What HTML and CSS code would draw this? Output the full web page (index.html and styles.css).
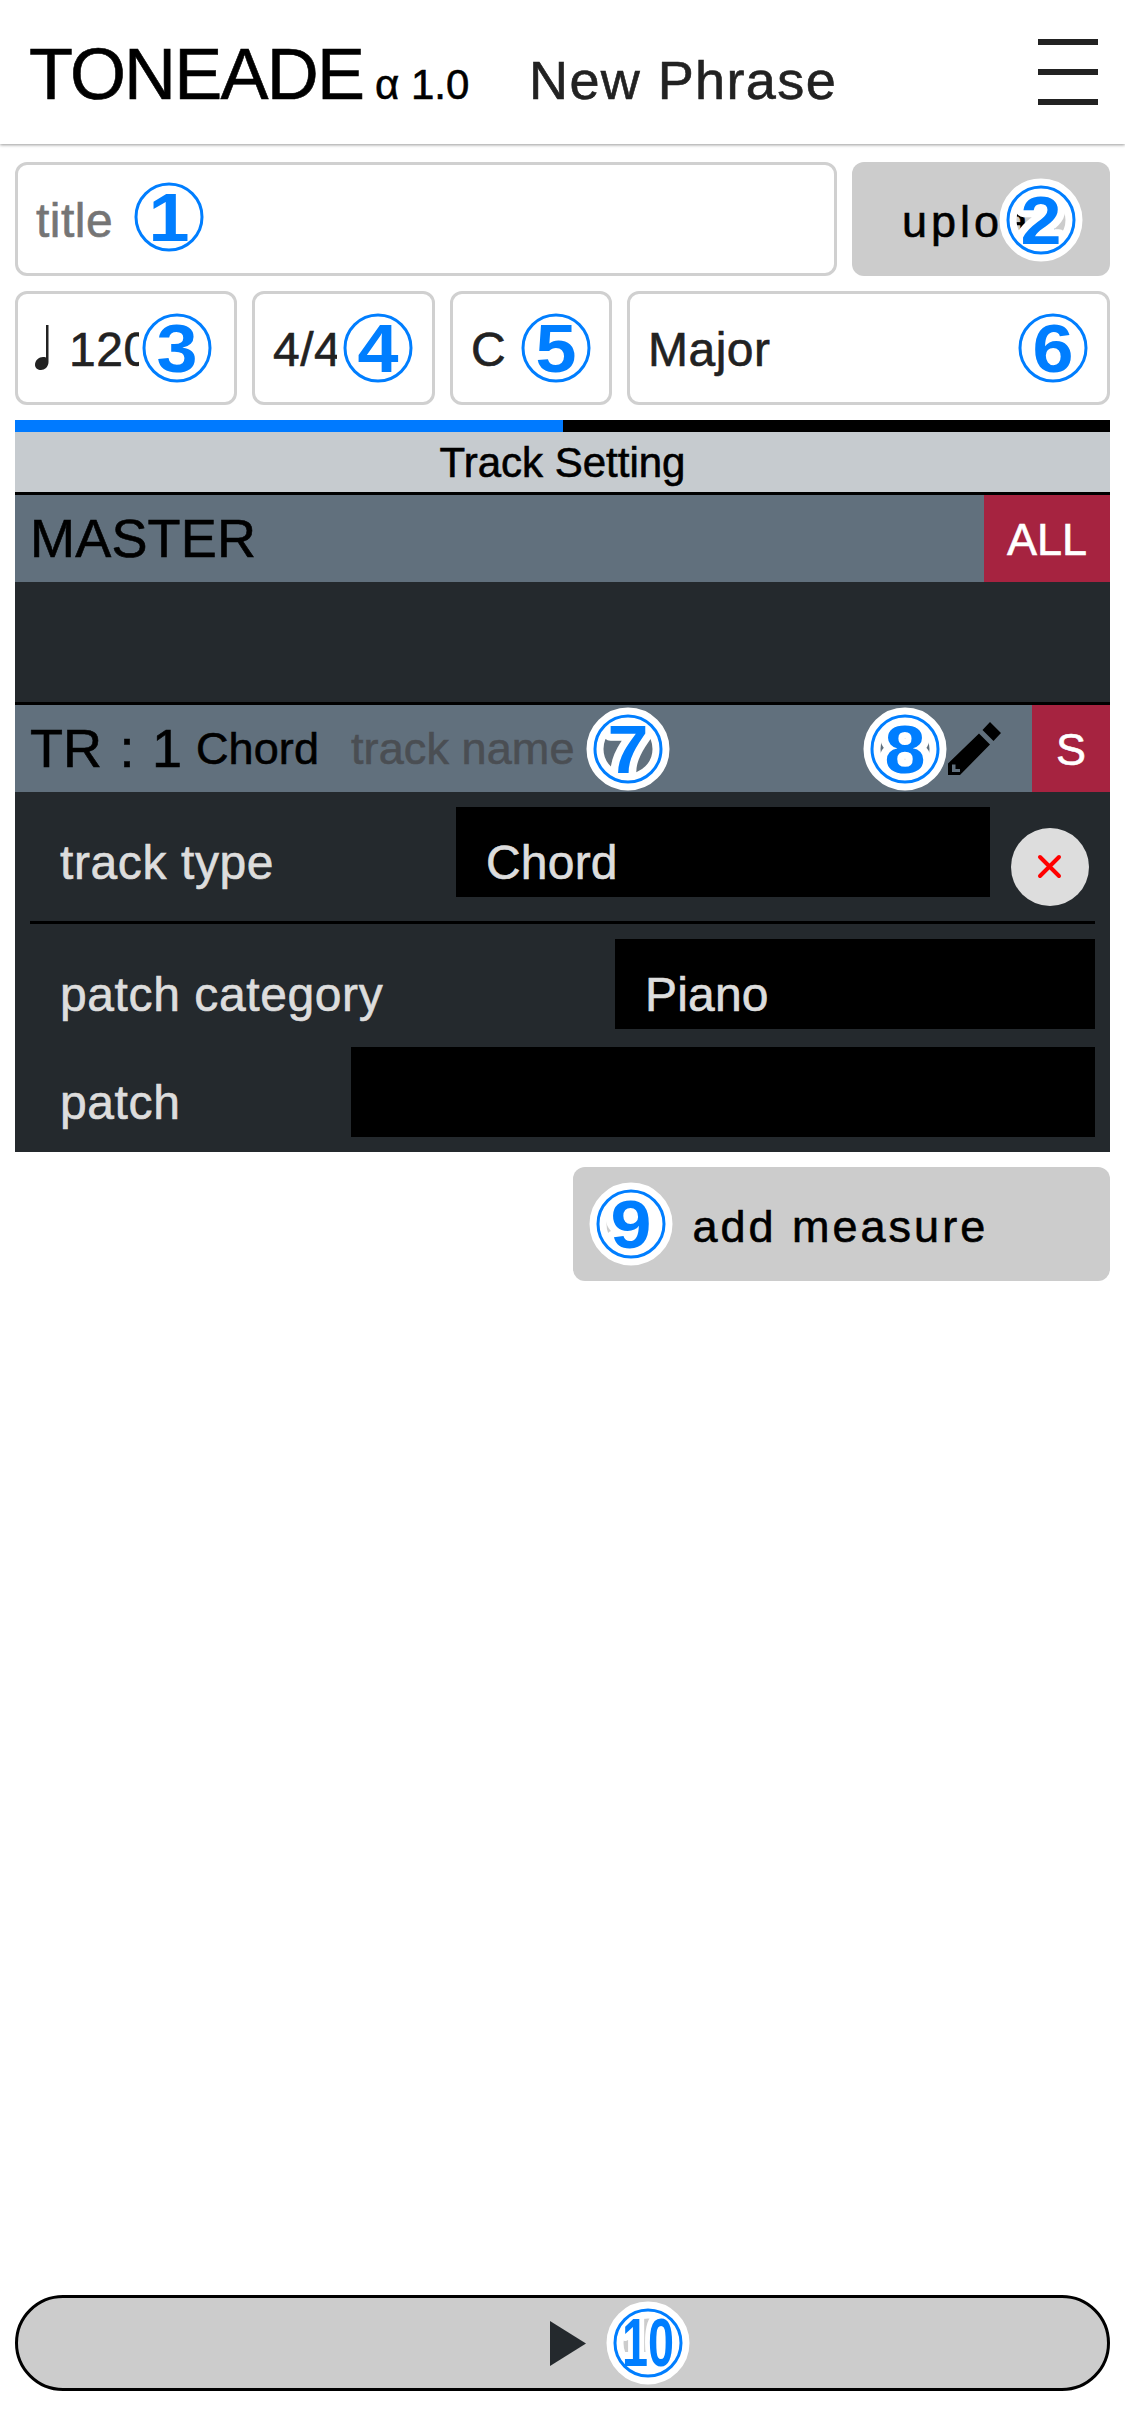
FILE: index.html
```html
<!DOCTYPE html>
<html lang="en">
<head>
<meta charset="utf-8">
<title>TONEADE - New Phrase</title>
<link rel="stylesheet" href="styles.css">
</head>
<body>
<header class="header">
  <div class="brand">TONEADE</div>
  <div class="version">α 1.0</div>
  <h1 class="page-name">New Phrase</h1>
  <div class="menu"><i></i><i></i><i></i></div>
</header>
<main class="main">
  <div class="row">
    <div class="field title"><span>title</span>
      <svg class="badge b1" viewBox="0 0 84 84"><circle cx="42" cy="42" r="33"/><text x="42" y="66" textLength="41" lengthAdjust="spacingAndGlyphs">1</text></svg>
    </div>
    <div class="button upload"><span>upload</span>
      <svg class="badge halo b2" viewBox="0 0 84 84"><circle class="back" cx="42" cy="42" r="33"/><text x="42" y="66" textLength="41" lengthAdjust="spacingAndGlyphs">2</text><circle cx="42" cy="42" r="33"/></svg>
    </div>
  </div>
  <div class="row">
    <div class="field tempo">
      <svg class="note" viewBox="0 0 16 46"><path d="M11 0h2.500v37c0 5-4 8-7.500 8-3 0-6-2-6-5 0-5 4-8 8-8 1 0 2 0 3 .6z"/></svg>
      <span class="clip">120</span>
      <svg class="badge b3" viewBox="0 0 84 84"><circle cx="42" cy="42" r="33"/><text x="42" y="66" textLength="41" lengthAdjust="spacingAndGlyphs">3</text></svg>
    </div>
    <div class="field meter"><span class="clip">4/4</span>
      <svg class="badge b4" viewBox="0 0 84 84"><circle cx="42" cy="42" r="33"/><text x="42" y="66" textLength="41" lengthAdjust="spacingAndGlyphs">4</text></svg>
    </div>
    <div class="field key"><span>C</span>
      <svg class="badge b5" viewBox="0 0 84 84"><circle cx="42" cy="42" r="33"/><text x="42" y="66" textLength="41" lengthAdjust="spacingAndGlyphs">5</text></svg>
    </div>
    <div class="field scale"><span>Major</span>
      <svg class="badge b6" viewBox="0 0 84 84"><circle cx="42" cy="42" r="33"/><text x="42" y="66" textLength="41" lengthAdjust="spacingAndGlyphs">6</text></svg>
    </div>
  </div>
  <section class="tracks">
    <div class="progress"><i></i></div>
    <div class="caption">Track Setting</div>
    <div class="track-head">
      <span class="track-id">MASTER</span>
      <span class="tag all">ALL</span>
    </div>
    <div class="master-body"></div>
    <div class="track-head">
      <span class="track-id number">TR : 1</span>
      <span class="kind">Chord</span>
      <span class="track-name">track name</span>
      <svg class="pencil" viewBox="0 0 53 53"><path d="M42 0L53 11 45.5 19 34.500 8zM31 11.500L42 22.500 12 53H0V41.500zM4 42.500v7.500h8v-3H7.500v-4.500z" fill-rule="evenodd"/></svg>
      <span class="tag solo">S</span>
      <svg class="badge halo b7" viewBox="0 0 84 84"><circle class="back" cx="42" cy="42" r="33"/><text x="42" y="66" textLength="41" lengthAdjust="spacingAndGlyphs">7</text><circle cx="42" cy="42" r="33"/></svg>
      <svg class="badge halo b8" viewBox="0 0 84 84"><circle class="back" cx="42" cy="42" r="33"/><text x="42" y="66" textLength="41" lengthAdjust="spacingAndGlyphs">8</text><circle cx="42" cy="42" r="33"/></svg>
    </div>
    <div class="track-body">
      <div class="setting type">
        <label>track type</label>
        <div class="select">Chord</div>
        <svg class="remove" viewBox="0 0 78 78"><circle cx="39" cy="39" r="39"/><path d="M29 29L48 48M48 29L29 48"/></svg>
      </div>
      <div class="setting category">
        <label>patch category</label>
        <div class="select">Piano</div>
      </div>
      <div class="setting patch">
        <label>patch</label>
        <div class="select"></div>
      </div>
    </div>
  </section>
  <div class="button add"><span>add measure</span>
    <svg class="badge halo b9" viewBox="0 0 84 84"><circle class="back" cx="42" cy="42" r="33"/><text x="42" y="66" textLength="41" lengthAdjust="spacingAndGlyphs">9</text><circle cx="42" cy="42" r="33"/></svg>
  </div>
</main>
<footer class="player">
  <svg class="play" viewBox="0 0 36 45"><path d="M0 0L36 22.500 0 45z"/></svg>
  <svg class="badge halo b10" viewBox="0 0 84 84"><circle class="back" cx="42" cy="42" r="33"/><text x="42" y="65" textLength="52" lengthAdjust="spacingAndGlyphs">10</text><circle cx="42" cy="42" r="33"/></svg>
</footer>
</body>
</html>
```
FILE: styles.css
```css
* { box-sizing: border-box; }
body {
  margin: 0;
  height: 2436px;
  display: flex;
  flex-direction: column;
  background: #fff;
  color: #222;
  font-family: "Liberation Sans", Arial, sans-serif;
  font-size: 48px;
  letter-spacing: .5px;
  white-space: nowrap;
  -webkit-text-stroke: .6px currentColor;
}
svg { display: block; flex: none; }

.header {
  position: relative;
  height: 144px;
  padding: 2px 27px 0 29px;
  display: flex;
  align-items: baseline;
  box-shadow: 0 1px 3px rgba(0, 0, 0, .4);
}
.brand { width: 346px; font-size: 72px; line-height: 144px; letter-spacing: -1.8px; color: #000; }
.version { width: 154px; font-size: 42px; letter-spacing: 0; color: #000; }
.page-name { margin: 0; font-size: 54px; font-weight: 400; letter-spacing: 1.4px; }
.menu {
  align-self: flex-start;
  margin: 37px 0 0 auto;
  width: 60px;
  display: flex;
  flex-direction: column;
  gap: 24px;
}
.menu i { height: 6px; background: #222; }

.main { padding: 18px 15px 0; display: flex; flex-direction: column; gap: 15px; }
.row { display: flex; gap: 15px; }
.field {
  position: relative;
  height: 114px;
  padding: 3px 0 0 18px;
  display: flex;
  align-items: center;
  border: 3px solid #d0d0d0;
  border-radius: 12px;
}
.title { flex: 1; color: #757575; }
.tempo { width: 222px; }
.meter { width: 183px; }
.key { width: 162px; }
.scale { flex: 1; }
.note { width: 16px; height: 46px; margin: -4px 18px 0 -1px; fill: #222; }
.clip { overflow: hidden; }
.tempo .clip { width: 70px; }
.meter .clip { width: 64px; }

.button {
  position: relative;
  height: 114px;
  padding-top: 5px;
  display: flex;
  align-items: center;
  border-radius: 12px;
  background: #ccc;
  color: #000;
  font-size: 45px;
  letter-spacing: 3px;
}
.upload { width: 258px; padding-left: 50px; letter-spacing: 4px; }
.add { width: 537px; padding-left: 119.5px; align-self: flex-end; }

.badge { position: absolute; width: 84px; height: 84px; overflow: visible; letter-spacing: 0; -webkit-text-stroke: 0; }
.badge circle { fill: none; stroke: #007eff; stroke-width: 3px; }
.badge text { font-size: 68px; font-weight: 700; text-anchor: middle; fill: #007eff; }
.badge .back { stroke: #fff; stroke-width: 17px; }
.halo text { stroke: #fff; stroke-width: 14px; stroke-linejoin: round; paint-order: stroke; }
.b1 { left: 108.7px; top: 10px; }
.b2 { left: 146.5px; top: 16.3px; }
.b3 { left: 117.2px; top: 12.3px; }
.b4 { left: 80.7px; top: 12.3px; }
.b5 { left: 61.4px; top: 12.3px; }
.b6 { left: 380.7px; top: 12.3px; }
.b7 { left: 571.3px; top: 1.7px; }
.b8 { left: 847.6px; top: 1.7px; }
.b9 { left: 16.4px; top: 15px; }
.b10 { left: 588px; top: 3.3px; }

.tracks { background: #24292d; }
.progress { height: 12px; background: #000; }
.progress i { display: block; width: 50%; height: 100%; background: #007aff; }
.caption {
  height: 60px;
  line-height: 61px;
  background: #c6cbcf;
  color: #000;
  font-size: 42px;
  letter-spacing: 0;
  text-align: center;
}
.track-head {
  position: relative;
  height: 90px;
  padding-left: 15px;
  display: flex;
  align-items: center;
  border-top: 3px solid #000;
  background: #61707d;
  color: #000;
  font-size: 45px;
  line-height: 89px;
  letter-spacing: .1px;
}
.track-id { font-size: 54px; letter-spacing: .2px; }
.number { width: 151px; letter-spacing: 0; word-spacing: 2.5px; }
.kind { width: 126px; margin-left: 15px; }
.track-name { margin-left: 29px; color: #4a4e53; }
.pencil { width: 53px; height: 53px; margin-left: auto; }
.tag { height: 87px; background: #a62340; color: #fff; text-align: center; }
.all { width: 126px; margin-left: auto; letter-spacing: 0; }
.solo { width: 78px; margin-left: 31px; }
.master-body { height: 120px; }

.track-body { padding: 0 15px 15px; color: #ddd; }
.setting { display: flex; align-items: flex-start; padding-top: 15px; }
.setting label { padding-left: 30px; line-height: 112px; height: 90px; letter-spacing: .6px; }
.select { height: 90px; padding-left: 30px; line-height: 112px; background: #000; letter-spacing: .2px; }
.type { height: 132px; border-bottom: 3px solid #000; }
.type label { width: 426px; }
.type .select { width: 534px; }
.remove { width: 78px; height: 78px; margin: 21px 0 0 21px; }
.remove circle { fill: #ddd; }
.remove path { fill: none; stroke: #f00; stroke-width: 4px; stroke-linecap: round; }
.category label { width: 585px; }
.category .select, .patch .select { flex: 1; }
.patch { padding-top: 18px; }
.patch label { width: 321px; }

.player {
  position: relative;
  height: 96px;
  margin: auto 15px 45px;
  padding-left: 532px;
  display: flex;
  align-items: center;
  border: 3px solid #000;
  border-radius: 48px;
  background: #ccc;
}
.play { width: 36px; height: 45px; fill: #24292d; }
```
